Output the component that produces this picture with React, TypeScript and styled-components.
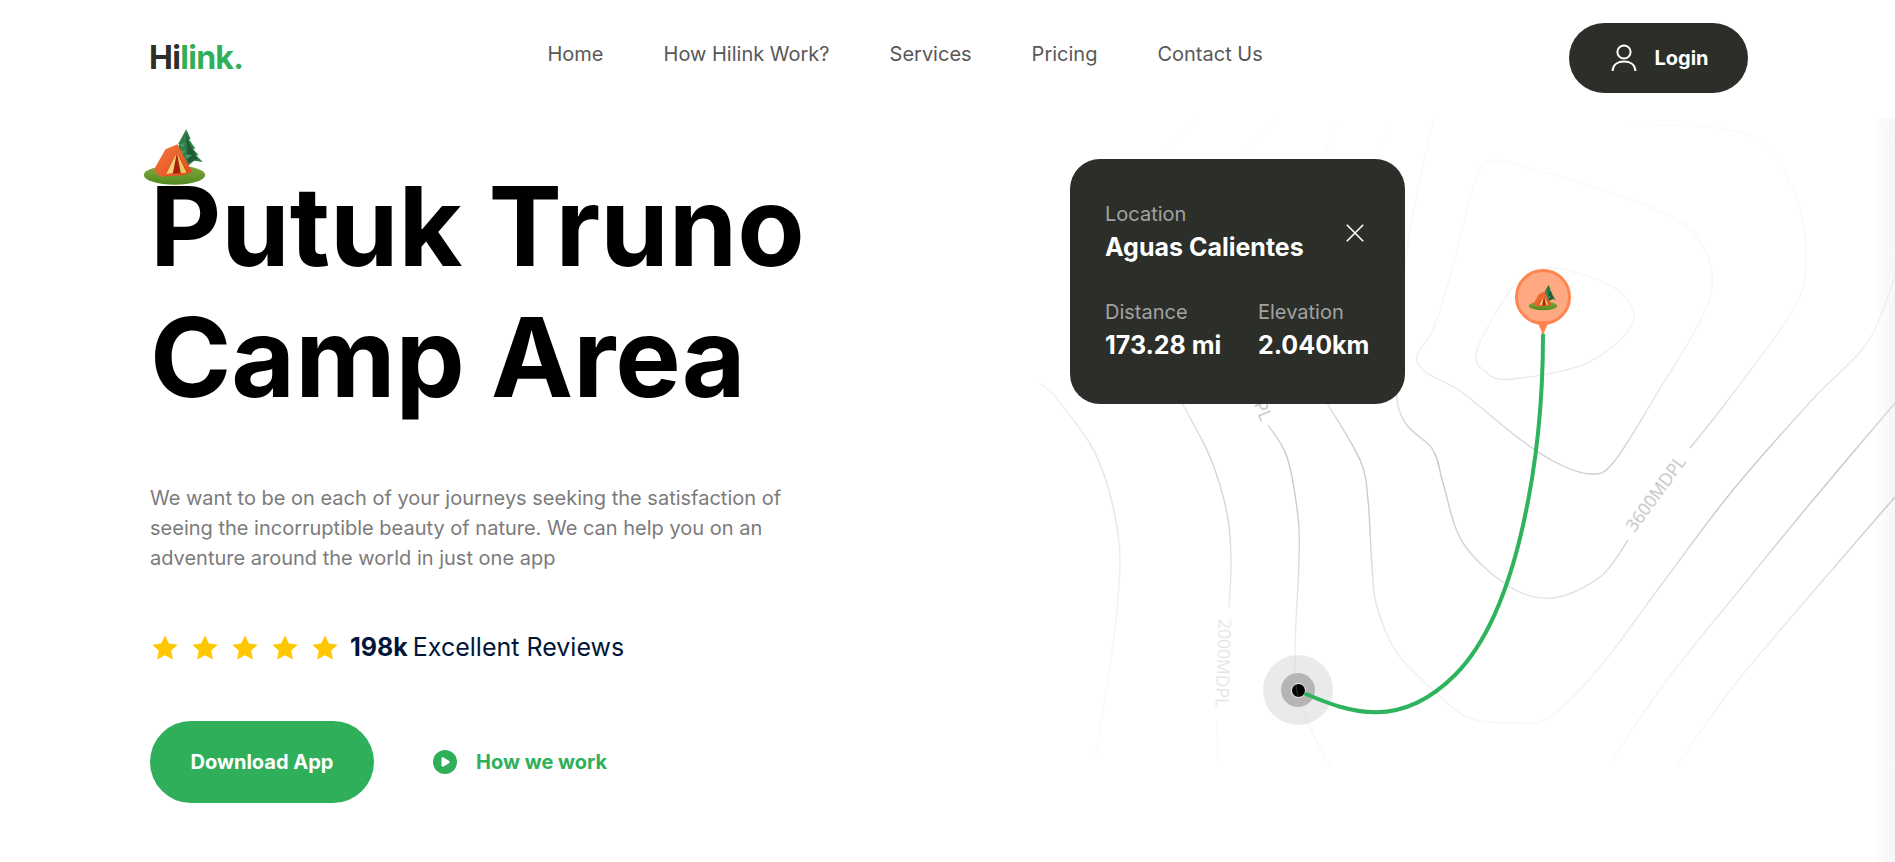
import styled, { createGlobalStyle } from 'styled-components';

const GlobalStyle = createGlobalStyle`
    * {
        box-sizing: border-box;
    }
    html, body {
        margin: 0;
        padding: 0;
        background: #fff;
        overflow: hidden;
        font-family: 'Inter', sans-serif;
    }
`;

const palette = {
    green: '#30af5b',
    dark: '#2c2e29',
    gray50: '#585858',
    gray30: '#7b7b7b',
    gray20: '#a2a2a2',
    navy: '#021639',
    star: '#ffc700',
};

const Page = styled.div`
    width: 100%;
    height: 862px;
    overflow: hidden;
`;

const Header = styled.header`
    height: 118px;
    padding: 0 147px 2px 150px;
    display: flex;
    align-items: center;
    justify-content: space-between;
`;

const Logo = styled.div`
    margin-left: -1px;
    font-size: 32px;
    line-height: 1;
    font-weight: 700;
    letter-spacing: -0.7px;
    color: ${palette.dark};
    span {
        color: ${palette.green};
    }
`;

const Nav = styled.nav`
    display: flex;
    gap: 60px;
    margin-right: 2px;
    padding-bottom: 8px;
    a {
        font-size: 20px;
        color: ${palette.gray50};
        text-decoration: none;
    }
`;

const LoginButton = styled.button`
    width: 179px;
    height: 70px;
    padding: 0 0 0 3px;
    border: none;
    border-radius: 35px;
    background: ${palette.dark};
    color: #fff;
    display: flex;
    align-items: center;
    justify-content: center;
    gap: 17px;
    font-family: inherit;
    font-size: 20px;
    font-weight: 700;
`;

const Hero = styled.main`
    display: flex;
    align-items: flex-start;
`;

const Intro = styled.section`
    width: 1030px;
    padding-left: 150px;
    padding-top: 43px;
`;

const Title = styled.h1`
    position: relative;
    margin: 0;
    font-size: 110px;
    line-height: 131px;
    font-weight: 700;
    color: #000;
    svg {
        position: absolute;
        left: -8px;
        top: -33px;
    }
`;

const Description = styled.p`
    margin: 60px 0 0;
    width: 680px;
    font-size: 20px;
    line-height: 30px;
    color: ${palette.gray30};
`;

const Reviews = styled.div`
    margin-top: 59px;
    display: flex;
    align-items: center;
    gap: 12px;
    color: ${palette.navy};
    font-size: 25px;
    b {
        font-weight: 700;
        margin-right: -2px;
    }
`;

const Stars = styled.div`
    display: flex;
    gap: 14px;
    padding-left: 2px;
    svg {
        display: block;
    }
`;

const Actions = styled.div`
    margin-top: 59px;
    display: flex;
    align-items: center;
    gap: 59px;
`;

const DownloadButton = styled.button`
    width: 224px;
    height: 82px;
    border: none;
    border-radius: 41px;
    background: ${palette.green};
    color: #fff;
    font-family: inherit;
    font-size: 20px;
    font-weight: 700;
`;

const HowLink = styled.a`
    display: flex;
    align-items: center;
    gap: 19px;
    color: ${palette.green};
    font-size: 20px;
    font-weight: 700;
`;

const MapArea = styled.section`
    position: relative;
    flex: 1;
    height: 744px;
    svg.contours {
        position: relative;
        z-index: 1;
        display: block;
    }
    &::after {
        content: '';
        position: absolute;
        top: 0;
        bottom: 0;
        right: 0;
        width: 22px;
        background: linear-gradient(90deg, rgba(245, 245, 245, 0), #f6f6f6);
    }
`;

const InfoCard = styled.div`
    position: absolute;
    z-index: 2;
    left: 40px;
    top: 41px;
    width: 335px;
    height: 245px;
    padding: 42px 30px 0 35px;
    border-radius: 30px;
    background: ${palette.dark};
    color: #fff;
`;

const CardTop = styled.div`
    display: flex;
    align-items: center;
    justify-content: space-between;
    padding-right: 11px;
    svg {
        margin-top: 3px;
    }
`;

const CardStats = styled.div`
    margin-top: 37px;
    display: flex;
    gap: 38px;
`;

const Stat = styled.div<{ $width?: number }>`
    width: ${(p) => (p.$width ? `${p.$width}px` : 'auto')};
`;

const StatLabel = styled.div`
    font-size: 20px;
    line-height: 26px;
    color: ${palette.gray20};
`;

const StatValue = styled.div`
    margin-top: 5px;
    font-size: 25px;
    line-height: 30px;
    font-weight: 700;
    white-space: nowrap;
`;

const MapPin = styled.div`
    position: absolute;
    z-index: 2;
    left: 485px;
    top: 151px;
    width: 56px;
    height: 56px;
    border: 3px solid #ff8450;
    border-radius: 50%;
    background: #ffa982;
    display: flex;
    align-items: center;
    justify-content: center;
    &::after {
        content: '';
        position: absolute;
        left: 50%;
        top: 49px;
        margin-left: -6px;
        border-left: 6px solid transparent;
        border-right: 6px solid transparent;
        border-top: 14px solid #ff8450;
    }
`;

const StartMarker = styled.div`
    position: absolute;
    left: 233px;
    top: 537px;
    width: 70px;
    height: 70px;
    border-radius: 50%;
    background: rgba(190, 190, 190, 0.33);
    display: flex;
    align-items: center;
    justify-content: center;
`;

const StartRing = styled.div`
    width: 34px;
    height: 34px;
    border-radius: 50%;
    background: #b5b5b5;
    display: flex;
    align-items: center;
    justify-content: center;
`;

const StartDot = styled.div`
    width: 15px;
    height: 15px;
    border: 1.5px solid #fff;
    border-radius: 50%;
    background: #000;
`;

type Point = [number, number];

// catmull-rom through the traced points, so the contours stay smooth
const smooth = (pts: Point[]) => {
    let d = `M${pts[0][0]} ${pts[0][1]}`;
    for (let i = 0; i < pts.length - 1; i++) {
        const p0 = pts[i - 1] || pts[i];
        const p1 = pts[i];
        const p2 = pts[i + 1];
        const p3 = pts[i + 2] || p2;
        const c1x = p1[0] + (p2[0] - p0[0]) / 6;
        const c1y = p1[1] + (p2[1] - p0[1]) / 6;
        const c2x = p2[0] - (p3[0] - p1[0]) / 6;
        const c2y = p2[1] - (p3[1] - p1[1]) / 6;
        d += ` C${c1x} ${c1y} ${c2x} ${c2y} ${p2[0]} ${p2[1]}`;
    }
    return d;
};

const contours: { pts: Point[]; o: number }[] = [
    { o: 0.5, pts: [[1040, 383], [1058, 400], [1097, 457], [1118, 533], [1118, 600], [1108, 680], [1095, 760]] },
    { o: 0.6, pts: [[1193, 120], [1160, 158]] },
    { o: 0.8, pts: [[1182, 403], [1210, 457], [1227, 513], [1231, 560], [1229, 608]] },
    { o: 0.8, pts: [[1217, 720], [1218, 767]] },
    { o: 0.6, pts: [[1273, 120], [1240, 158]] },
    { o: 1, pts: [[1268, 425], [1287, 457], [1298, 517], [1299, 560], [1295, 653], [1300, 703], [1330, 767]] },
    { o: 0.6, pts: [[1338, 120], [1323, 158]] },
    { o: 0.6, pts: [[1388, 120], [1380, 158]] },
    { o: 1, pts: [[1327, 403], [1360, 460], [1368, 500], [1372, 567], [1377, 607], [1397, 653], [1430, 687], [1467, 717], [1513, 723], [1550, 717], [1600, 667], [1667, 577], [1733, 490], [1812, 400], [1867, 343], [1895, 277]] },
    { o: 1, pts: [[1433, 120], [1407, 250], [1397, 400], [1433, 450], [1443, 483], [1463, 543], [1510, 587], [1553, 598], [1600, 577], [1628, 540]] },
    { o: 0.9, pts: [[1690, 448], [1728, 400], [1793, 310], [1806, 260], [1797, 200], [1767, 147], [1717, 128], [1627, 125]] },
    { o: 0.9, pts: [[1500, 160], [1478, 173], [1450, 277], [1433, 330], [1417, 355], [1423, 370], [1440, 380], [1463, 393], [1517, 437], [1555, 462], [1590, 474], [1613, 463], [1653, 400], [1710, 297], [1697, 237], [1650, 207], [1570, 180], [1500, 160]] },
    { o: 0.9, pts: [[1543, 268], [1513, 287], [1477, 350], [1487, 373], [1513, 379], [1587, 363], [1633, 323], [1617, 290], [1567, 270], [1543, 268]] },
    { o: 1, pts: [[1895, 403], [1813, 500], [1750, 577], [1667, 680], [1610, 763]] },
    { o: 1, pts: [[1895, 497], [1800, 607], [1733, 687], [1677, 765]] },
    { o: 0.5, pts: [[1880, 118], [1893, 150]] },
];

const CampIcon = ({ width, height }: { width: number; height: number }) => (
    <svg width={width} height={height} viewBox="36 24 194 174" aria-hidden="true">
        <defs>
            <linearGradient id="grass" x1="0" y1="0" x2="0" y2="1">
                <stop offset="0" stopColor="#86a93c" />
                <stop offset="1" stopColor="#4f8a20" />
            </linearGradient>
            <linearGradient id="fabric" x1="0" y1="0" x2="1" y2="1">
                <stop offset="0" stopColor="#f57b3d" />
                <stop offset="1" stopColor="#e2471d" />
            </linearGradient>
        </defs>
        <ellipse cx="133" cy="165" rx="92" ry="29" fill="url(#grass)" />
        <path d="M168 28 L182 58 L176 58 L196 86 L188 86 L206 106 L198 106 L218 126 L192 122 L176 136 L160 128 L126 118 L138 100 L132 98 L148 74 L144 72 Z" fill="#2f7f48" />
        <path d="M168 40 L176 66 L190 92 L202 118 L172 128 Z" fill="#1f5c36" />
        <path d="M150 72 L166 70 L156 84 Z M146 92 L168 92 L152 106 Z M164 104 L186 104 L172 116 Z" fill="#4c9a63" />
        <path d="M106 88 L142 73 L186 156 L160 166 L88 170 L72 148 Z" fill="url(#fabric)" />
        <path d="M140 98 L172 158 L108 162 Z" fill="#a81f12" />
        <path d="M140 98 L128 160 L108 162 Z" fill="#f3d477" />
        <path d="M140 98 L170 158 L152 160 Z" fill="#edc860" />
    </svg>
);

const Star = () => (
    <svg width="26" height="25" viewBox="0 0 26 25" aria-hidden="true">
        <path d="M13 0.5 L16.9 8.6 L25.6 9.7 L19.2 15.8 L20.9 24.6 L13 20.3 L5.1 24.6 L6.8 15.8 L0.4 9.7 L9.1 8.6 Z" fill={palette.star} />
    </svg>
);

const UserIcon = () => (
    <svg width="26" height="28" viewBox="0 0 26 28" fill="none" stroke="#fff" strokeWidth="2" aria-hidden="true">
        <circle cx="13" cy="8" r="6.6" />
        <path d="M1.5 27 C2 20.5 7 17.6 13 17.6 C19 17.6 24 20.5 24.5 27" />
    </svg>
);

const PlayIcon = () => (
    <svg width="24" height="24" viewBox="0 0 24 24" aria-hidden="true">
        <circle cx="12" cy="12" r="12" fill={palette.green} />
        <path d="M8.5 8.8 C8.5 7.6 9.6 7 10.6 7.6 L15.9 10.7 C16.9 11.3 16.9 12.7 15.9 13.3 L10.6 16.4 C9.6 17 8.5 16.4 8.5 15.2 Z" fill="#fff" />
    </svg>
);

const CloseIcon = () => (
    <svg width="18" height="18" viewBox="0 0 18 18" stroke="#fff" strokeWidth="1.6" aria-hidden="true">
        <path d="M0.8 0.8 L17.2 17.2 M17.2 0.8 L0.8 17.2" />
    </svg>
);

const App = () => (
    <Page>
        <GlobalStyle />
        <Header>
            <Logo>
                Hi<span>link.</span>
            </Logo>
            <Nav>
                <a>Home</a>
                <a>How Hilink Work?</a>
                <a>Services</a>
                <a>Pricing</a>
                <a>Contact Us</a>
            </Nav>
            <LoginButton>
                <UserIcon />
                Login
            </LoginButton>
        </Header>
        <Hero>
            <Intro>
                <Title>
                    <CampIcon width={65} height={58} />
                    Putuk Truno
                    <br />
                    Camp Area
                </Title>
                <Description>
                    We want to be on each of your journeys seeking the satisfaction of seeing the incorruptible beauty of
                    nature. We can help you on an adventure around the world in just one app
                </Description>
                <Reviews>
                    <Stars>
                        <Star />
                        <Star />
                        <Star />
                        <Star />
                        <Star />
                    </Stars>
                    <span>
                        <b>198k</b> Excellent Reviews
                    </span>
                </Reviews>
                <Actions>
                    <DownloadButton>Download App</DownloadButton>
                    <HowLink>
                        <PlayIcon />
                        How we work
                    </HowLink>
                </Actions>
            </Intro>
            <MapArea>
                <StartMarker>
                    <StartRing>
                        <StartDot />
                    </StartRing>
                </StartMarker>
                <svg className="contours" width="865" height="650" viewBox="1030 118 865 650" fill="none">
                    <defs>
                        <linearGradient id="fade" gradientUnits="userSpaceOnUse" x1="0" y1="118" x2="0" y2="768">
                            <stop offset="0" stopColor="#fff" stopOpacity="0.08" />
                            <stop offset="0.1" stopColor="#fff" stopOpacity="0.1" />
                            <stop offset="0.33" stopColor="#fff" stopOpacity="0.2" />
                            <stop offset="0.42" stopColor="#fff" stopOpacity="0.45" />
                            <stop offset="0.52" stopColor="#fff" stopOpacity="0.9" />
                            <stop offset="0.62" stopColor="#fff" stopOpacity="0.8" />
                            <stop offset="0.74" stopColor="#fff" stopOpacity="0.45" />
                            <stop offset="0.85" stopColor="#fff" stopOpacity="0.22" />
                            <stop offset="1" stopColor="#fff" stopOpacity="0.08" />
                        </linearGradient>
                        <mask id="contour-fade" maskUnits="userSpaceOnUse" x="1030" y="118" width="865" height="650">
                            <rect x="1030" y="118" width="865" height="650" fill="url(#fade)" />
                        </mask>
                    </defs>
                    <g mask="url(#contour-fade)" stroke="#c2c2c2" strokeWidth="1.4">
                        {contours.map((c, i) => (
                            <path key={i} d={smooth(c.pts)} opacity={c.o} />
                        ))}
                    </g>
                    <g fontFamily="'Open Sans', sans-serif" fontSize="17.5" textAnchor="middle">
                        <text x="1656" y="500" fill="#c0c0c0" transform="rotate(-54 1656 494)">3600MDPL</text>
                        <text x="1223" y="669" fill="#e4e4e4" transform="rotate(92 1223 663)">2000MDPL</text>
                        <text x="1250" y="385" fill="#c0c0c0" transform="rotate(68 1250 379)">2800MDPL</text>
                    </g>
                    <path
                        d="M1306 694 C1350 713 1400 730 1455 675 C1520 610 1543 450 1543 335"
                        stroke="#2db45d"
                        strokeWidth="4"
                        strokeLinecap="round"
                    />
                </svg>
                <InfoCard>
                    <CardTop>
                        <div>
                            <StatLabel>Location</StatLabel>
                            <StatValue>Aguas Calientes</StatValue>
                        </div>
                        <CloseIcon />
                    </CardTop>
                    <CardStats>
                        <Stat $width={115}>
                            <StatLabel>Distance</StatLabel>
                            <StatValue>173.28 mi</StatValue>
                        </Stat>
                        <Stat>
                            <StatLabel>Elevation</StatLabel>
                            <StatValue>2.040km</StatValue>
                        </Stat>
                    </CardStats>
                </InfoCard>
                <MapPin>
                    <CampIcon width={30} height={27} />
                </MapPin>
            </MapArea>
        </Hero>
    </Page>
);

export default App;
